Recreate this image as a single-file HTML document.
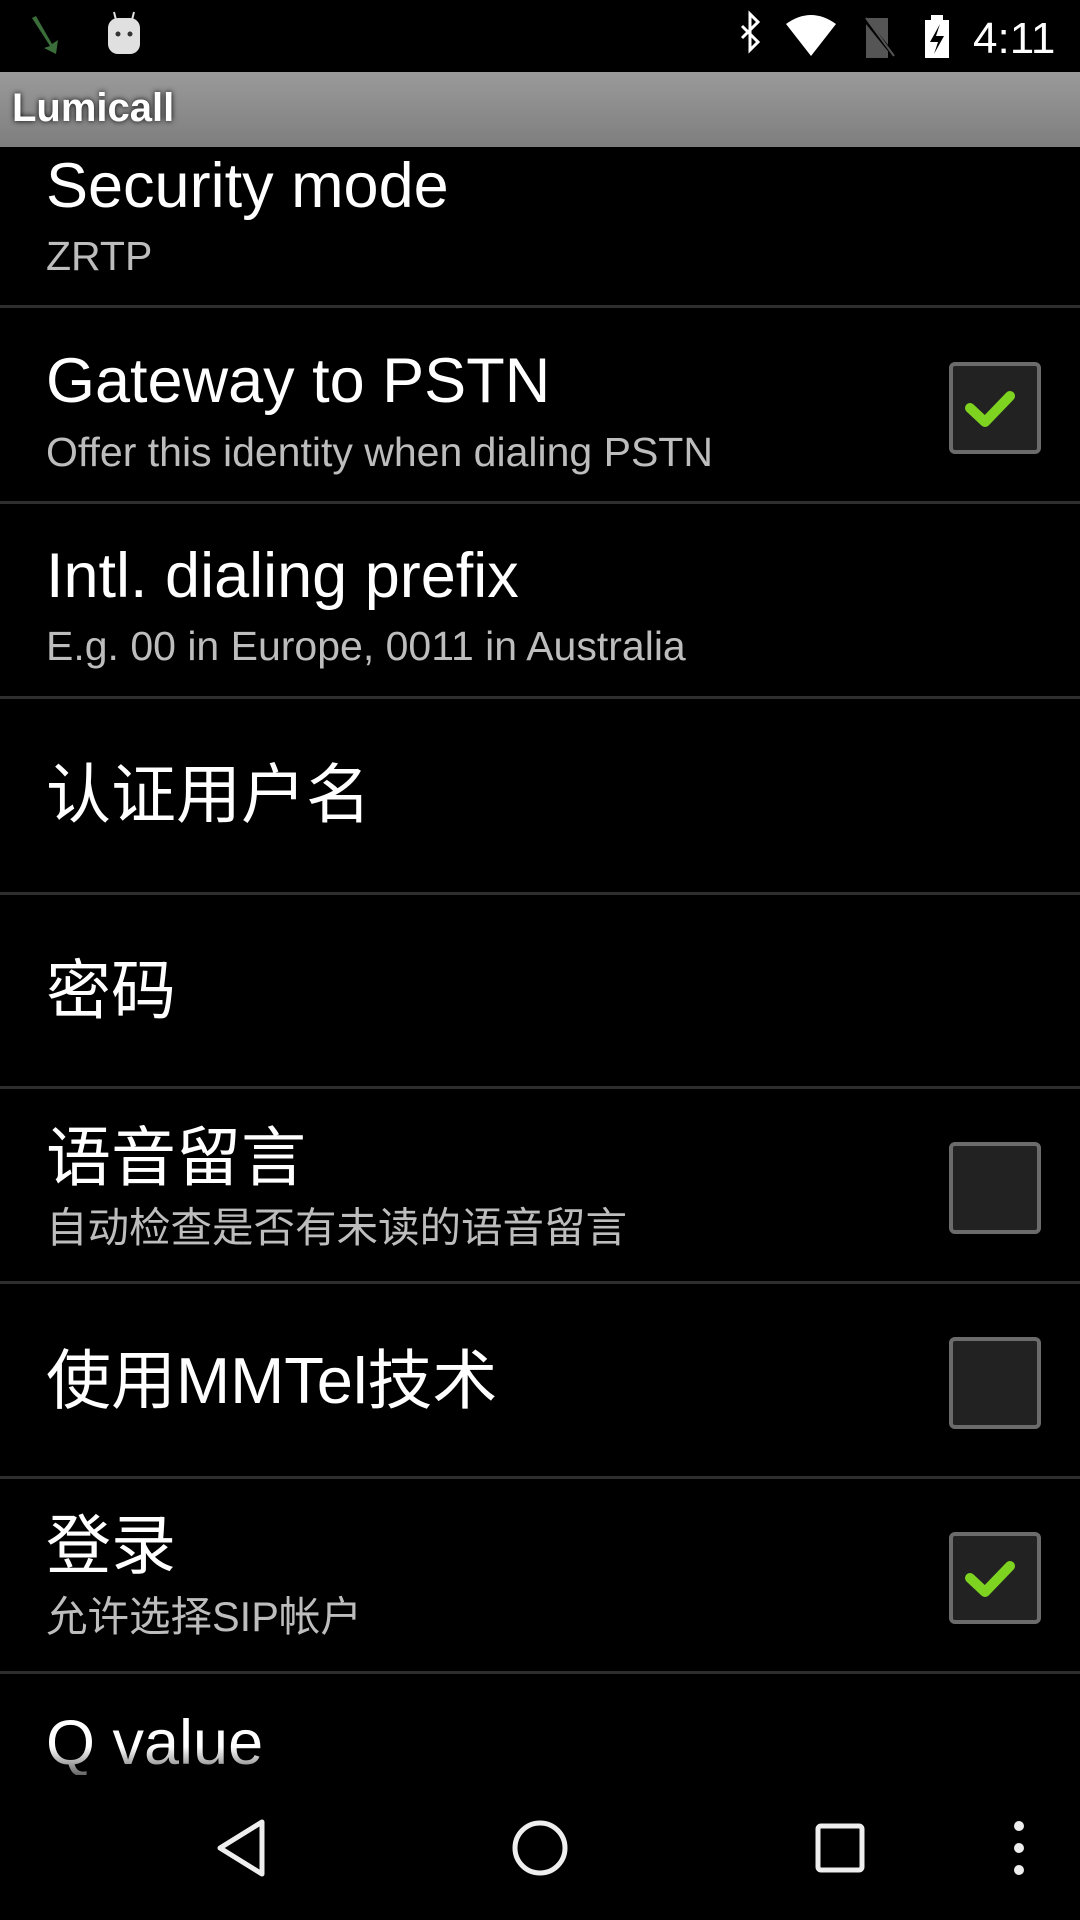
<!DOCTYPE html>
<html><head><meta charset="utf-8"><style>
html,body{margin:0;padding:0;background:#000;width:1080px;height:1920px;overflow:hidden;position:relative;font-family:"Liberation Sans","Noto Sans CJK SC",sans-serif;}
.a{position:absolute;white-space:nowrap;}
.t{position:absolute;left:46px;color:#fff;font-size:63px;line-height:1;white-space:nowrap;}
.c{font-size:65px;}
.s{position:absolute;left:46px;color:#bdbdbd;font-size:41px;line-height:1;white-space:nowrap;}
.sc{font-size:41.5px;}
.d{position:absolute;left:0;width:1080px;height:3px;background:#2e2e2e;}
.cb{position:absolute;left:949px;width:84px;height:84px;border:4px solid #6b6b6b;border-radius:6px;background:#222;box-sizing:content-box;}
</style></head><body>
<svg class="a" style="left:0;top:0" width="1080" height="72">
<path d="M36 16 L52 44 L58 40 L56 54 L44 48 L50 46 L32 18 Z" fill="#3a6d3a"/>
<rect x="108" y="18" width="32" height="36" rx="10" fill="#e0e0e0"/>
<line x1="114" y1="12" x2="116" y2="20" stroke="#e0e0e0" stroke-width="2"/>
<line x1="134" y1="12" x2="132" y2="20" stroke="#e0e0e0" stroke-width="2"/>
<circle cx="118" cy="34" r="2.5" fill="#333"/><circle cx="130" cy="34" r="2.5" fill="#333"/>
<path d="M742 26 L758 42 L750 50 V14 L758 22 L742 38" fill="none" stroke="#fff" stroke-width="3"/>
<path d="M786 24 Q811 6 836 24 L811 56 Z" fill="#fff"/>
<path d="M866 18 H888 V58 H866 Z" fill="#555"/>
<line x1="862" y1="16" x2="896" y2="58" stroke="#000" stroke-width="4"/>
<line x1="866" y1="18" x2="894" y2="56" stroke="#555" stroke-width="2"/>
<rect x="925" y="20" width="24" height="38" fill="#fff"/><rect x="931" y="15" width="12" height="6" fill="#fff"/>
<path d="M940 24 L930 42 H938 L934 54 L944 36 H936 Z" fill="#000"/>
</svg>
<div class="a" style="left:973px;top:14px;color:#fff;font-size:44px;">4:11</div>
<div class="a" style="left:0;top:72px;width:1080px;height:75px;background:linear-gradient(#9a9a9a,#7e7e7e);"></div>
<div class="a" style="left:12px;top:86px;color:#fff;font-size:40px;font-weight:bold;text-shadow:0 0 6px #000;">Lumicall</div>

<div class="t" style="top:155px">Security mode</div>
<div class="s" style="top:236px">ZRTP</div>
<div class="d" style="top:305px"></div>
<div class="t" style="top:350px">Gateway to PSTN</div>
<div class="s" style="top:432px">Offer this identity when dialing PSTN</div>
<div class="cb" style="top:362px"></div>
<div class="d" style="top:501px"></div>
<div class="t" style="top:545px">Intl. dialing prefix</div>
<div class="s" style="top:626px">E.g. 00 in Europe, 0011 in Australia</div>
<div class="d" style="top:696px"></div>
<div class="t c" style="top:762px">认证用户名</div>
<div class="d" style="top:892px"></div>
<div class="t c" style="top:958px">密码</div>
<div class="d" style="top:1086px"></div>
<div class="t c" style="top:1125px">语音留言</div>
<div class="s sc" style="top:1207px">自动检查是否有未读的语音留言</div>
<div class="cb" style="top:1142px"></div>
<div class="d" style="top:1281px"></div>
<div class="t c" style="top:1348px">使用MMTel技术</div>
<div class="cb" style="top:1337px"></div>
<div class="d" style="top:1476px"></div>
<div class="t c" style="top:1513px">登录</div>
<div class="s sc" style="top:1596px">允许选择SIP帐户</div>
<div class="cb" style="top:1532px"></div>
<div class="d" style="top:1671px"></div>
<div class="t" style="top:1712px;background:linear-gradient(#fff 55%,#666);-webkit-background-clip:text;color:transparent;">Q value</div>
<svg class="a" style="left:0;top:0" width="1080" height="1920">
<path d="M970 408 L985 422 L1010 396" fill="none" stroke="#7ed321" stroke-width="10" stroke-linecap="round" stroke-linejoin="round"/>
<path d="M970 1578 L985 1592 L1010 1566" fill="none" stroke="#7ed321" stroke-width="10" stroke-linecap="round" stroke-linejoin="round"/>
<rect x="0" y="1782" width="1080" height="138" fill="#000"/>
<path d="M262 1822 L220 1848 L262 1874 Z" fill="none" stroke="#eee" stroke-width="5" stroke-linejoin="round"/>
<circle cx="540" cy="1848" r="25" fill="none" stroke="#eee" stroke-width="5"/>
<rect x="818" y="1826" width="44" height="44" rx="3" fill="none" stroke="#eee" stroke-width="5"/>
<circle cx="1019" cy="1826" r="5" fill="#eee"/><circle cx="1019" cy="1848" r="5" fill="#eee"/><circle cx="1019" cy="1870" r="5" fill="#eee"/>
</svg>
</body></html>
